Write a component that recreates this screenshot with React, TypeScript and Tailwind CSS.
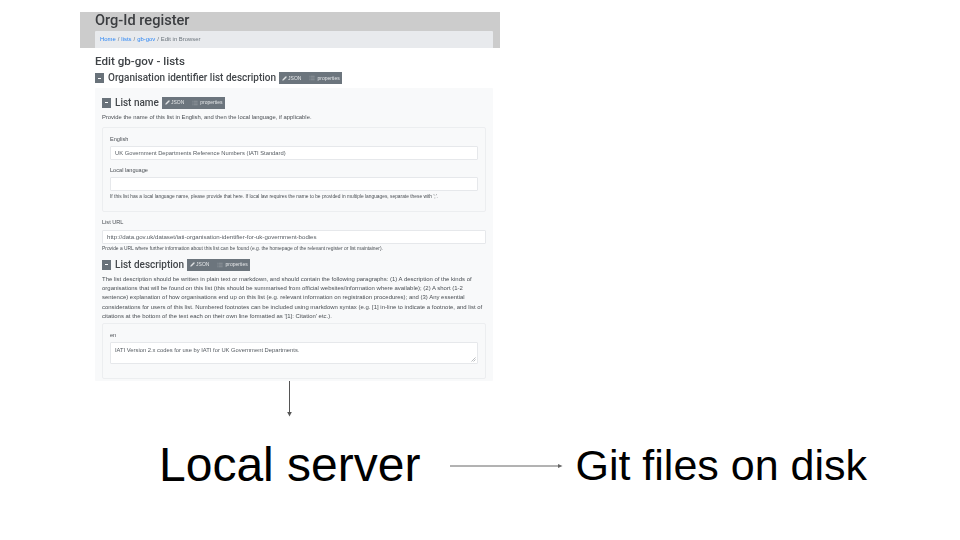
import { Pencil, List } from "lucide-react";

function Badges() {
  return (
    <span className="-ml-[1px] inline-flex h-[12px] w-[63px] shrink-0 items-center gap-[8px] bg-[#6c757d] pl-[3px] text-[5px] leading-none text-[#e4e6e8]">
      <span className="flex items-center gap-[1px]">
        <Pencil size={5} fill="currentColor" strokeWidth={1} />
        JSON
      </span>
      <span className="flex items-center gap-[2px]">
        <List size={6} strokeWidth={1} />
        properties
      </span>
    </span>
  );
}

function Collapse() {
  return (
    <span className="flex h-[10px] w-[9px] shrink-0 items-center justify-center bg-[#69727a]">
      <span className="h-[1px] w-[3px] bg-white" />
    </span>
  );
}

function Heading({ children }: { children: string }) {
  return <h3 className="font-['Roboto',sans-serif] text-[10px] leading-none font-medium text-[#43474b]">{children}</h3>;
}

function Field({ value, className = "" }: { value?: string; className?: string }) {
  return (
    <div className={`flex items-center rounded-[1px] border border-[#e6e8eb] bg-white pl-[4px] text-[5.8px] text-[#555b61] ${className}`}>
      {value}
    </div>
  );
}

export default function App() {
  return (
    <div className="h-[540px] w-[960px] overflow-hidden bg-white font-['Liberation_Sans',Arial,sans-serif]">
      <div className="ml-[80px] pt-[12px] w-[420px] blur-[0.4px]">
        <div className="h-[36px] bg-[#cccccc] px-[15px]">
          <h1 className="font-['Roboto',sans-serif] text-[14.6px] leading-[17px] font-medium text-[#3b3d40]">Org-Id register</h1>
          <div className="mt-[2px] flex h-[17px] w-[398px] items-center rounded-t-[1px] bg-[#e8eaed] pl-[5px] text-[5.9px] text-[#6c757d]">
            <span className="text-[#2b86f5]">Home</span>
            <span className="mx-[2px]">/</span>
            <span className="text-[#2b86f5]">lists</span>
            <span className="mx-[2px]">/</span>
            <span className="text-[#2b86f5]">gb-gov</span>
            <span className="mx-[2px]">/</span>
            Edit in Browser
          </div>
        </div>

        <div className="pl-[15px] pr-[7px]">
          <h2 className="mt-[6px] font-['Roboto',sans-serif] text-[11.6px] leading-[14px] font-medium text-[#3f4347]">Edit gb-gov - lists</h2>
          <div className="mt-[3px] flex h-[14px] items-center gap-[4px]">
            <Collapse />
            <Heading>Organisation identifier list description</Heading>
            <Badges />
          </div>

          <div className="mt-[3px] h-[293px] overflow-hidden rounded-[1px] bg-[#f8f9fa] px-[7px] pt-[8px] text-[#4a4f54]">
            <div className="flex h-[13px] items-center gap-[4px]">
              <Collapse />
              <Heading>List name</Heading>
              <Badges />
            </div>
            <p className="mt-[4px] text-[5.85px] leading-[8px]">Provide the name of this list in English, and then the local language, if applicable.</p>

            <div className="mt-[6px] h-[85px] rounded-[2px] border border-[#eceef0] px-[7px] pt-[7px]">
              <div className="text-[5.6px] leading-[8px]">English</div>
              <Field value="UK Government Departments Reference Numbers (IATI Standard)" className="mt-[3px] h-[14px]" />
              <div className="mt-[6px] text-[5.6px] leading-[8px]">Local language</div>
              <Field className="mt-[3px] h-[14px]" />
              <p className="mt-[2px] text-[4.85px] leading-[7px]">If this list has a local language name, please provide that here. If local law requires the name to be provided in multiple languages, separate these with ';'.</p>
            </div>

            <div className="mt-[6px] text-[5.6px] leading-[8px]">List URL</div>
            <Field value="http://data.gov.uk/dataset/iati-organisation-identifier-for-uk-government-bodies" className="mt-[4px] h-[14px] text-[6.1px]" />
            <p className="mt-[1px] text-[4.9px] leading-[7px]">Provide a URL where further information about this list can be found (e.g. the homepage of the relevant register or list maintainer).</p>

            <div className="mt-[6px] flex h-[13px] items-center gap-[4px]">
              <Collapse />
              <Heading>List description</Heading>
              <Badges />
            </div>
            <p className="mt-[4px] text-[5.97px] leading-[9.2px]">
              The list description should be written in plain text or markdown, and should contain the following paragraphs: (1) A description of the kinds of organisations that will be found on this list (this should be summarised from official websites/information where available); (2) A short (1-2 sentence) explanation of how organisations end up on this list (e.g. relevant information on registration procedures); and (3) Any essential considerations for users of this list. Numbered footnotes can be included using markdown syntax (e.g. [1] in-line to indicate a footnote, and list of citations at the bottom of the text each on their own line formatted as '[1]: Citation' etc.).
            </p>

            <div className="mt-[2px] h-[56px] rounded-[2px] border border-[#eceef0] px-[7px] pt-[7px]">
              <div className="text-[5.6px] leading-[8px]">en</div>
              <div className="relative mt-[3px] h-[22px] rounded-[1px] border border-[#e6e8eb] bg-white pl-[4px] pt-[3px] text-[5.8px] leading-[8px] text-[#555b61]">
                IATI Version 2.x codes for use by IATI for UK Government Departments.
                <svg className="absolute right-[1px] bottom-[1px]" width="5" height="5" viewBox="0 0 5 5">
                  <path d="M0.5 4.5 L4.5 0.5 M2.5 4.5 L4.5 2.5" stroke="#8a8f94" strokeWidth="0.6" />
                </svg>
              </div>
            </div>
          </div>
        </div>
      </div>

      <svg className="ml-[285px] block" width="9" height="36" viewBox="0 0 9 36">
        <path d="M4.5 0 V31" stroke="#555555" strokeWidth="1" />
        <path d="M2.2 31 H6.8 L4.5 35.5 Z" fill="#555555" />
      </svg>

      <div className="mt-[20px] flex items-center">
        <span className="ml-[159px] text-[48px] leading-[56px] text-black">Local server</span>
        <svg className="ml-[30px] mt-[1px]" width="113" height="6" viewBox="0 0 113 6">
          <path d="M0 3 H108" stroke="#666666" strokeWidth="1" />
          <path d="M108 1 L112.5 3 L108 5 Z" fill="#666666" />
        </svg>
        <span className="ml-[12px] -mt-[1px] text-[43px] leading-[50px] text-black">Git files on disk</span>
      </div>
    </div>
  );
}
